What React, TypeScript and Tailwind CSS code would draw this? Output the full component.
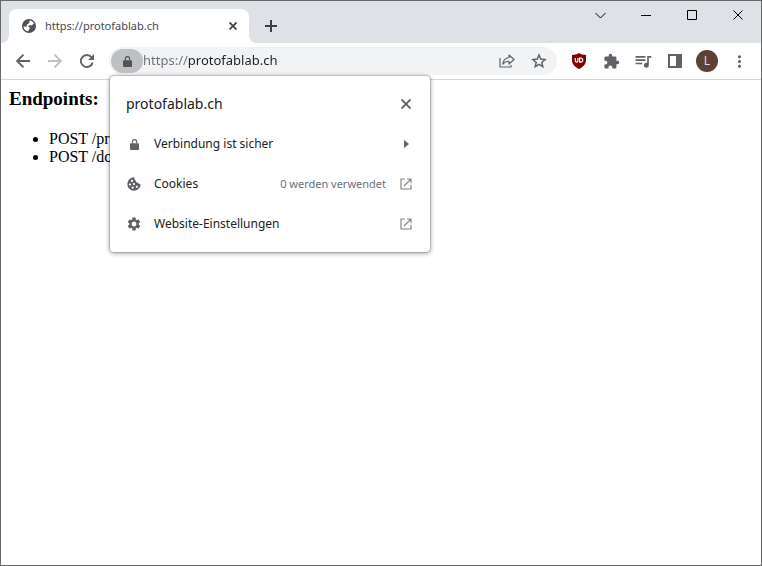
import React from "react";
import { MdExtension, MdMoreVert, MdQueueMusic, MdSettings } from "react-icons/md";

type ButtonProps = { label: string; className?: string; children: React.ReactNode };

function WindowButton({ label, children }: ButtonProps) {
  return (
    <button aria-label={label} className="flex h-7 w-[46px] items-center justify-center text-black">
      <svg width="11" height="11" viewBox="0 0 11 11" fill="none" stroke="currentColor">
        {children}
      </svg>
    </button>
  );
}

function ToolButton({ label, className = "text-[#5f6368]", children }: ButtonProps) {
  return (
    <button aria-label={label} className={`flex h-7 w-8 shrink-0 items-center justify-center ${className}`}>
      {children}
    </button>
  );
}

function LockIcon() {
  return (
    <svg width="9" height="11" viewBox="0 0 10 12">
      <path d="M1 4.500h8a1 1 0 0 1 1 1V11a1 1 0 0 1-1 1H1a1 1 0 0 1-1-1V5.500a1 1 0 0 1 1-1z" fill="currentColor" />
      <path d="M2.600 5V3a2.400 2.400 0 0 1 4.800 0v2" fill="none" stroke="currentColor" strokeWidth="1.200" />
    </svg>
  );
}

function GlobeIcon() {
  return (
    <svg width="14" height="14" viewBox="0 0 14 14">
      <circle cx="7" cy="7" r="7" fill="#505357" />
      <path d="M7.500 1.500c2 .1 3.700 1.300 4.500 3L9.500 6.500 8 6 6 7.200l1.800 1.300-.3 1.500-1.500 2.300C3.500 12 1.700 10 1.500 7.500l3 .2.600-2.200L7.300 4z" fill="#fff" />
      <path d="M9 8.500l2.800-.8c-.2 1.800-1.200 3-2.300 3.700z" fill="#505357" />
    </svg>
  );
}

function CookieIcon() {
  return (
    <svg width="14" height="14" viewBox="0 0 14 14">
      <path d="M7 .3a6.700 6.700 0 1 0 6.700 6.900c-1.200.3-2.300-.3-2.600-1.400-1.400.2-2.500-.8-2.300-2.200C7.600 3.200 6.900 1.700 7.500.3z" fill="currentColor" />
      <circle cx="5" cy="3.900" r="1.100" fill="#fff" />
      <circle cx="3" cy="7.500" r="1.100" fill="#fff" />
      <circle cx="7" cy="7" r="1.100" fill="#fff" />
      <circle cx="5.700" cy="10.700" r="1.100" fill="#fff" />
      <circle cx="9.800" cy="9.800" r="1.100" fill="#fff" />
    </svg>
  );
}

function ArrowIcon({ forward = false }: { forward?: boolean }) {
  return (
    <svg width="14" height="14" viewBox="0 0 14 14" fill="none" stroke="currentColor" strokeWidth="1.9">
      {forward ? <path d="M0 7h13M6.500 0.700L12.800 7l-6.300 6.300" /> : <path d="M14 7H1M7.500 0.700L1.200 7l6.300 6.300" />}
    </svg>
  );
}

function ReloadIcon() {
  return (
    <svg width="14" height="14" viewBox="0 0 14 14">
      <path d="M11.500 3.200A6 6 0 1 0 12.700 8.500" fill="none" stroke="currentColor" strokeWidth="1.900" />
      <path d="M14 0v6H8z" fill="currentColor" />
    </svg>
  );
}

function StarIcon() {
  return (
    <svg width="16" height="16" viewBox="0 0 16 16" fill="none" stroke="currentColor" strokeWidth="1.500">
      <path d="M8 2l1.700 4.100 4.400.4-3.300 2.900 1 4.300L8 11.400l-3.800 2.300 1-4.300-3.300-2.900 4.400-.4z" />
    </svg>
  );
}

function TabStrip() {
  return (
    <header className="flex h-[42px] items-start bg-[#dee1e6]">
      <div className="relative ml-2 mt-2 flex h-[34px] w-60 items-center rounded-t-lg bg-white pl-3 pr-2">
        <svg className="absolute -left-2 bottom-0" width="8" height="8" viewBox="0 0 8 8">
          <path d="M8 0v8H0a8 8 0 0 0 8-8z" fill="#fff" />
        </svg>
        <svg className="absolute -right-2 bottom-0" width="8" height="8" viewBox="0 0 8 8">
          <path d="M0 0v8h8a8 8 0 0 1-8-8z" fill="#fff" />
        </svg>
        <span className="flex size-4 items-center justify-center">
          <GlobeIcon />
        </span>
        <span className="ml-2 flex-1 text-[11px] text-[#45494d]">https://protofablab.ch</span>
        <button aria-label="Tab schließen" className="flex size-4 items-center justify-center text-[#3c4043]">
          <svg width="8" height="8" viewBox="0 0 8 8" stroke="currentColor" strokeWidth="1.7">
            <path d="M0.5 0.5l7 7M7.5 0.5l-7 7" />
          </svg>
        </button>
      </div>
      <button aria-label="Neuer Tab" className="ml-2 mt-[11px] flex size-7 items-center justify-center text-[#3c4043]">
        <svg width="12" height="12" viewBox="0 0 12 12" stroke="currentColor" strokeWidth="2">
          <path d="M6 0v12M0 6h12" />
        </svg>
      </button>
      <div className="ml-auto flex">
        <WindowButton label="Tabs durchsuchen">
          <path d="M0.5 3l5 5 5-5" />
        </WindowButton>
        <WindowButton label="Minimieren">
          <path d="M0 5.5h10" />
        </WindowButton>
        <WindowButton label="Maximieren">
          <path d="M0.5 0.5h9v9h-9z" />
        </WindowButton>
        <WindowButton label="Schließen">
          <path d="M0.5 0.5l9 9M9.5 0.5l-9 9" />
        </WindowButton>
      </div>
    </header>
  );
}

function ExternalIcon() {
  return (
    <svg width="12" height="12" viewBox="0 0 12 12" fill="none" stroke="#80868b" strokeWidth="1.2">
      <path d="M5 1H1v10h10V7M7 1h4v4M11 1L4 8" />
    </svg>
  );
}

type RowProps = { icon: React.ReactNode; label: string; detail?: string; trailing: React.ReactNode };

function InfoRow({ icon, label, detail, trailing }: RowProps) {
  return (
    <button className="flex h-10 w-full items-center gap-3 px-4 text-left text-xs text-[#202124]">
      <span className="flex size-4 items-center justify-center text-[#5f6368]">{icon}</span>
      <span className="flex-1">{label}</span>
      {detail && <span className="text-[11px] text-[#6b6f74]">{detail}</span>}
      <span className="flex size-4 items-center justify-center text-[#5f6368]">{trailing}</span>
    </button>
  );
}

function SiteInfo() {
  return (
    <section
      aria-label="Website-Informationen"
      className="absolute left-px top-[29px] z-10 w-80 rounded-sm bg-white py-2 shadow-[0_0_0_1px_rgba(0,0,0,0.15),0_1px_4px_1px_rgba(0,0,0,0.3)]"
    >
      <div className="flex h-10 items-center justify-between px-4">
        <h2 className="text-sm text-[#202124]">protofablab.ch</h2>
        <button aria-label="Schließen" className="flex size-4 items-center justify-center text-[#5f6368]">
          <svg width="10" height="10" viewBox="0 0 10 10" stroke="currentColor" strokeWidth="1.9">
            <path d="M0.5 0.5l9 9M9.5 0.5l-9 9" />
          </svg>
        </button>
      </div>
      <InfoRow
        icon={<LockIcon />}
        label="Verbindung ist sicher"
        trailing={
          <svg width="5" height="8" viewBox="0 0 5 8">
            <path d="M0 0l5 4-5 4z" fill="currentColor" />
          </svg>
        }
      />
      <InfoRow icon={<CookieIcon />} label="Cookies" detail="0 werden verwendet" trailing={<ExternalIcon />} />
      <InfoRow icon={<MdSettings size={16} />} label="Website-Einstellungen" trailing={<ExternalIcon />} />
    </section>
  );
}

function Toolbar() {
  return (
    <nav className="flex h-[37px] items-center gap-1.5 border-b border-[#d5d7da] bg-white px-1.5">
      <div className="flex">
        <ToolButton label="Zurück"><ArrowIcon /></ToolButton>
        <ToolButton label="Vorwärts" className="text-[#bdbfc2]"><ArrowIcon forward /></ToolButton>
        <ToolButton label="Neu laden"><ReloadIcon /></ToolButton>
      </div>
      <div className="relative flex h-7 min-w-0 flex-1 items-center rounded-full bg-[#f1f3f4] px-0.5">
        <button
          aria-label="Website-Informationen anzeigen"
          className="flex h-6 w-8 shrink-0 items-center justify-center rounded-full bg-[#bfc0c2] text-[#505357]"
        >
          <LockIcon />
        </button>
        <input
          aria-label="Adresse"
          defaultValue="https://protofablab.ch"
          className="min-w-0 flex-1 bg-[linear-gradient(to_right,#6b6f74_45px,#202124_45px)] bg-clip-text text-[13px] text-transparent outline-none"
        />
        <ToolButton label="Teilen">
          <svg width="16" height="14" viewBox="0 0 16 14" fill="none" stroke="currentColor" strokeWidth="1.2">
            <path d="M1 4v9h11v-2" />
            <path d="M10 1l5 4.500-5 4.500V7.500C7.500 7.300 5.500 8 3.800 10 4.200 6.500 6.500 4 10 3.500z" strokeLinejoin="round" />
          </svg>
        </ToolButton>
        <ToolButton label="Lesezeichen"><StarIcon /></ToolButton>
        <SiteInfo />
      </div>
      <div className="flex">
        <ToolButton label="uBlock Origin">
          <svg width="16" height="16" viewBox="0 0 16 16" fill="none">
            <path d="M8 0c2 1.400 4.300 1.900 7 2v5c0 4-2.500 7-7 9-4.500-2-7-5-7-9V2c2.700-.1 5-.6 7-2z" fill="#800000" />
            <path d="M4.300 5v2.700a1.300 1.300 0 0 0 2.700 0V5M8.600 5v4.200h1a2.100 2.100 0 0 0 0-4.200z" stroke="#fff" strokeWidth="1.200" />
          </svg>
        </ToolButton>
        <ToolButton label="Erweiterungen"><MdExtension size={17} /></ToolButton>
        <ToolButton label="Mediensteuerung"><MdQueueMusic size={20} /></ToolButton>
        <ToolButton label="Seitenleiste">
          <svg width="14" height="14" viewBox="0 0 14 14">
            <path d="M0 0h14v14H0zM2 2v10h6V2z" fill="currentColor" fillRule="evenodd" />
          </svg>
        </ToolButton>
        <ToolButton label="Profil">
          <span className="flex size-[22px] items-center justify-center rounded-full bg-[#5d4037] text-xs text-[#e0d9d7]">
            L
          </span>
        </ToolButton>
        <ToolButton label="Menü"><MdMoreVert size={19} /></ToolButton>
      </div>
    </nav>
  );
}

export default function App() {
  return (
    <div className="flex min-h-screen flex-col border border-[#69696c] bg-white font-['Noto_Sans','Open_Sans',sans-serif]">
      <TabStrip />
      <Toolbar />
      <main className="px-2 pt-2 font-['Liberation_Serif',serif] text-black">
        <h3 className="text-[19px] leading-[22px] font-bold">Endpoints:</h3>
        <ul className="mt-5 list-disc pl-10 text-base leading-[18px]">
          <li>POST /pr</li>
          <li>POST /do</li>
        </ul>
      </main>
    </div>
  );
}
